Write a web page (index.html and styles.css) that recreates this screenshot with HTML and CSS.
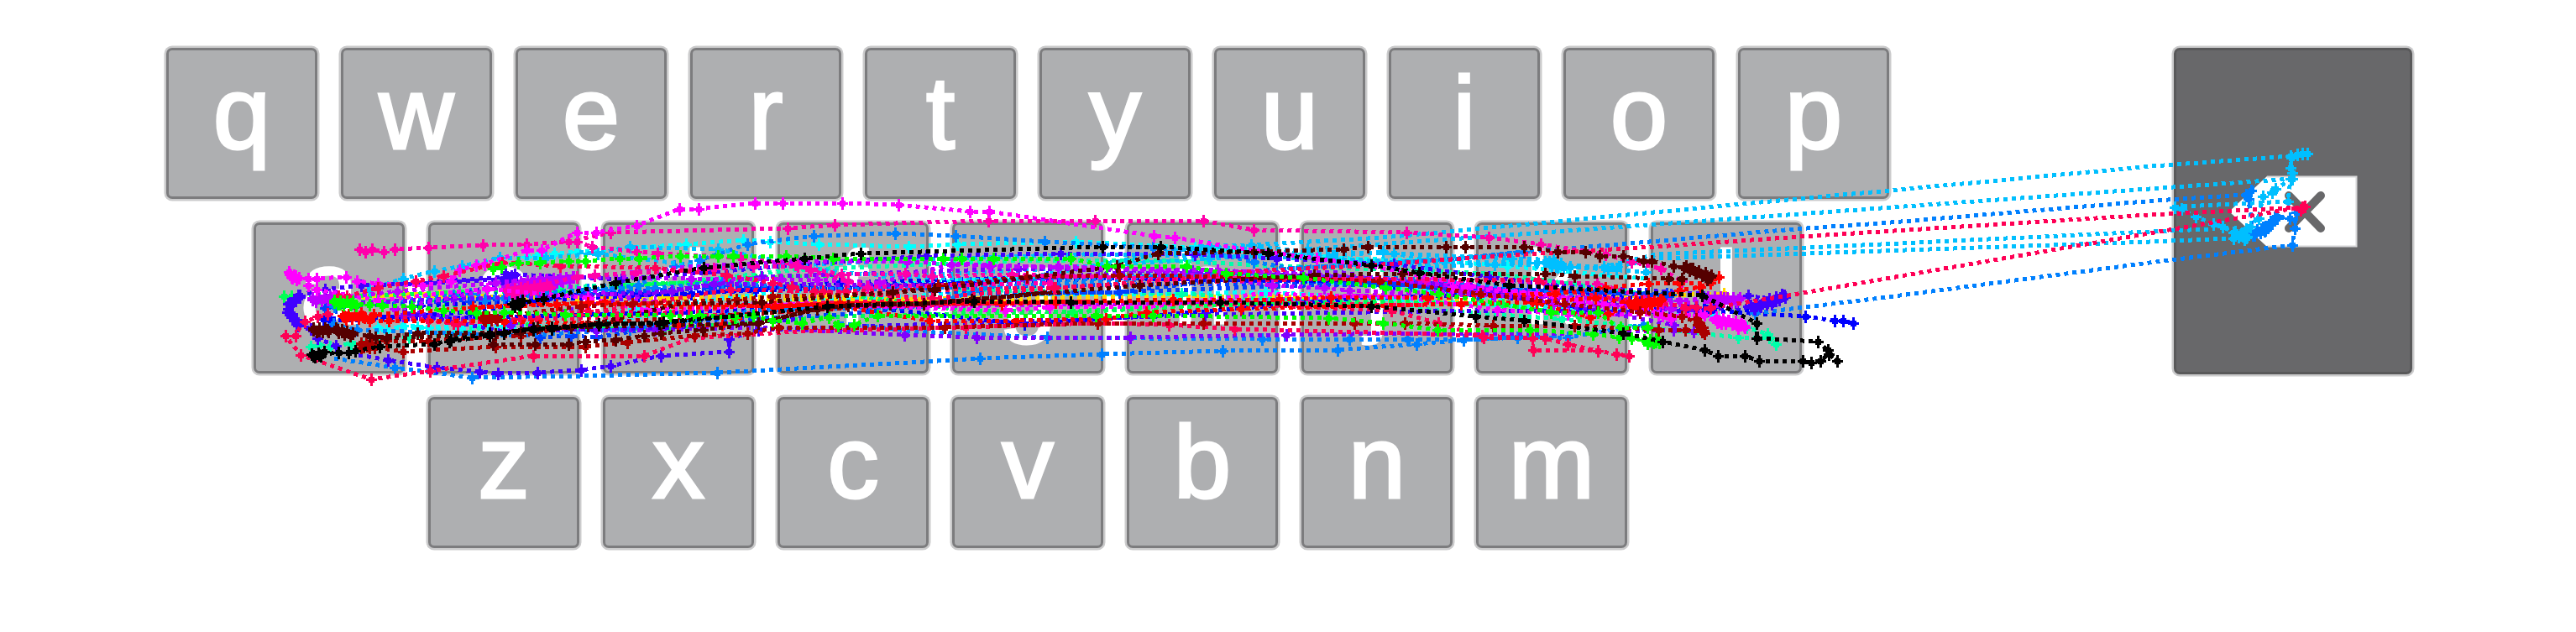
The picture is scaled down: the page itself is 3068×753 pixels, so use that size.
FILE: index.html
```html
<!DOCTYPE html>
<html lang="en">
<head>
<meta charset="utf-8">
<title>Keyboard gesture traces</title>
<link rel="stylesheet" href="styles.css">
</head>
<body>
<main class="board">
  <div class="keys">
    <div class="row row-top"><span class="key">q</span><span class="key">w</span><span class="key">e</span><span class="key">r</span><span class="key">t</span><span class="key">y</span><span class="key">u</span><span class="key">i</span><span class="key">o</span><span class="key">p</span></div>
    <div class="row row-home"><span class="key">a</span><span class="key">s</span><span class="key">d</span><span class="key">f</span><span class="key">g</span><span class="key">h</span><span class="key">j</span><span class="key">k</span><span class="key">l</span></div>
    <div class="row row-bottom"><span class="key">z</span><span class="key">x</span><span class="key">c</span><span class="key">v</span><span class="key">b</span><span class="key">n</span><span class="key">m</span></div>
  </div>
  <div class="key key-delete">
    <svg class="delete-icon" viewBox="0 0 154 86" width="154" height="86">
      <path d="M1 43L46 1H153V85H46Z" fill="#fff"/>
      <path d="M46 1.5H152.5V84.5H46" fill="none" stroke="#d6d6d7" stroke-width="2"/>
      <path d="M72 24L110 63M110 24L72 63" fill="none" stroke="#68686a" stroke-width="10" stroke-linecap="round"/>
    </svg>
  </div>
  <svg class="traces" viewBox="0 0 3068 753" width="3068" height="753"></svg>
</main>
<script src="traces.js"></script>
</body>
</html>
```

FILE: styles.css
```css
body {
  margin: 0;
  background: #fff;
  font-family: "Liberation Sans", Arial, sans-serif;
}

.board {
  position: relative;
  box-sizing: border-box;
  display: flex;
  align-items: flex-start;
  gap: 339px;
  width: 3068px;
  height: 753px;
  padding: 57px 0 0 198px;
  overflow: hidden;
}

.keys {
  display: flex;
  flex-direction: column;
  gap: 28px;
}

.row {
  display: flex;
  gap: 28px;
}

.row-home {
  padding-left: 104px;
}

.row-bottom {
  padding-left: 312px;
}

.key {
  box-sizing: border-box;
  width: 180px;
  height: 180px;
  border: 3px solid #7c7c7e;
  border-radius: 7px;
  background: #aeafb1;
  box-shadow: 0 0 0 2.5px #cbcbcc;
  color: #fff;
  font-size: 123px;
  line-height: 149px;
  text-align: center;
  -webkit-text-stroke: 3px #fff;
}

.key-delete {
  display: flex;
  align-items: center;
  justify-content: center;
  width: 284px;
  height: 389px;
  border-color: #59595a;
  background: #68686a;
}

.traces {
  position: absolute;
  inset: 0;
}

.line {
  fill: none;
  stroke-width: 5;
  stroke-dasharray: 5 5;
  shape-rendering: crispEdges;
}

.mark {
  shape-rendering: crispEdges;
}
```

FILE: traces.js
```js
// Each trace: colour, points. A "~" point bends the line without a mark.
const traces = [
  ["#ffd500", "433,352 523,352 687,355 790,353 983,353 ~1050,357 ~1323,353 ~1487,353 ~1690,357 ~1790,357 2053,350"],
  ["#ffd500", "483,350 600,354 ~900,356 ~1110,360 ~1323,356 ~1487,357 ~1640,353 ~1800,359"],
  ["#ffd500", "~1390,351 ~1500,355 ~1640,352 ~1720,358"],
  ["#00ffff", "450,390 497,390 545,393 700,385 ~900,362 ~1140,350 1403,350 1507,348 ~1770,363 ~1900,370 2040,374"],
  ["#00ffff", "627,306 640,304 660,302 687,300 817,291 885,286 917,288 975,291 1082,294 1140,291 1281,288 1423,295 ~1607,308 ~1703,310 1795,317 ~1960,332"],
  ["#00ffff", "460,394 480,388 510,390 600,388 760,368 950,345 ~1190,332 ~1450,326 1700,345 1900,372"],
  ["#00ffaa", "370,413 380,411 393,413 418,409 487,402 560,396 663,342 ~800,338 ~940,322 ~1200,311 ~1380,310 ~1500,316 ~1780,326 1960,350"],
  ["#00ffaa", "~1140,345 1407,350 ~1607,362 ~1757,373 1860,380 2070,402 2107,402 2115,410 2105,398 2080,390"],
  ["#00ff55", "338,353 347,353 380,355 547,348 670,347 740,342 780,338 823,337 900,333 ~1000,350 ~1150,370 1277,372 ~1440,364 ~1607,358 1790,363 1880,376"],
  ["#00ff55", "400,360 520,358 640,390 790,392 ~1000,377 1277,371 ~1500,360 ~1660,362 1790,363"],
  ["#00ff55", "~740,340 ~820,337 ~900,331 ~1010,328"],
  ["#0000ff", "385,380 483,377 560,372 693,350 823,350 1000,337 1247,330 ~1480,334 ~1700,338 1880,366 2033,370 2150,377 2185,382 2195,382 2207,385"],
  ["#0000ff", "393,382 590,378 820,372 1010,364 1220,386 ~1400,374 ~1620,355 1800,350 1980,362"],
  ["#0000ff", "500,364 640,358 760,352 900,346 ~1060,341 ~1240,334 ~1440,330 1660,338 1820,346 1960,356 2040,366 2090,371"],
  ["#0040ff", "387,367 400,366 590,355 700,349 847,343 ~1000,342 ~1200,350 1333,348 ~1500,328 1723,343 1900,348 1980,352"],
  ["#0040ff", "643,402 680,400 710,402 830,382 ~1000,375 ~1240,350 1333,348 ~1720,334 1960,350 1985,350"],
  ["#0040ff", "560,359 620,352 700,352 860,340 ~1020,345 ~1220,341 ~1420,338 1680,340 1760,350 1850,345 1990,351"],
  ["#0080ff", "397,386 425,393 620,400 750,392 ~900,370 ~1100,365 ~1200,336 ~1493,325 ~1700,333 1900,355"],
  ["#0080ff", "398,365 560,350 600,355 720,345 760,340 803,317 833,310 890,291 969,281 1066,278 1138,281 1244,288 1373,295 ~1440,300 1493,312 ~1540,320 ~1737,308 1815,300 ~1930,291 ~2137,273 ~2240,266 ~2567,239 2675,232 2681,227 2678,237 ~2682,270 2683,280 2693,273 2697,275 2704,268 2712,258 2727,260 2735,253 2733,272 2730,292 ~2560,313 ~2240,355 ~2133,368 2090,373"],
  ["#0080ff", "~398,427 470,438 562,450 ~693,448 854,444 ~1083,432 1167,427 1312,422 1456,418 1593,417 1687,410 1743,405 1807,402 1867,402 1957,387"],
  ["#0080ff", "~1000,385 ~1090,395 1247,402 ~1363,403 1503,404 1607,404 1676,404 1743,405 ~1860,400"],
  ["#0080ff", "540,352 577,358 606,352 700,345 780,343 860,336 ~980,345 ~1180,342 ~1380,332 ~1560,318 ~1700,312 1815,300"],
  ["#00bfff", "440,345 480,332 517,323 550,317 595,307 650,307 712,302 750,294 855,297 ~1000,325 ~1200,335 ~1423,295 1440,293 ~1490,292 ~1647,283 ~1810,268 ~2140,237 ~2240,228 ~2563,198 2728,186 2736,184 2742,183 2748,183 2729,188 2728,200 2730,206 2730,213 ~2560,225 ~2240,248 ~1990,266 ~1783,281 1557,297"],
  ["#00bfff", "2730,213 2710,225 2706,229 2695,234 2690,260 2675,273 2675,283 2668,280 2660,277 2647,270 2636,267 2615,258 2598,249 2590,247 ~2600,246 2725,240 2728,213"],
  ["#00bfff", "1490,292 1587,305 1647,300 1720,312 1853,317 1910,318 ~1973,303 ~2240,291 ~2560,276 ~2632,273"],
  ["#00bfff", "1430,294 1500,297 1590,308 1700,318 1780,315 1840,312 1853,317 1915,320 ~1973,308 ~2240,299 ~2560,288 2660,284 2670,278 2680,270"],
  ["#00bfff", "~1050,330 ~1220,322 1440,308 ~1560,300 1660,302 1800,308 1850,310 1870,318 1960,324"],
  ["#00bfff", "~690,300 ~860,320 ~1080,310 ~1290,303 ~1500,306 ~1690,312 1830,313 1925,320"],
  ["#7f00ff", "480,376 490,375 500,373 607,387 710,394 780,393 ~900,390 1077,399 1163,402 1346,402 1532,399 ~1690,397 ~1850,398 1993,393 2017,395"],
  ["#7f00ff", "420,361 540,356 700,352 800,347 907,330 1213,320 1420,323 ~1600,325 1777,350 1900,370 1993,387"],
  ["#7f00ff", "610,385 720,360 850,338 ~1120,340 ~1330,325 1460,326 ~1600,330 1750,340 1850,358 1980,367 2020,370"],
  ["#4000ff", "~427,423 462,429 520,438 571,443 593,445 640,444 692,441 727,436 787,424 868,419 868,404 903,393 ~1150,385 1435,375 ~1757,370 ~1980,372 ~2080,366 2097,365 2110,362 2123,352 2115,358 2082,352"],
  ["#4000ff", "400,412 378,403 370,392 353,386 350,380 342,372 343,362 350,358 357,352 387,345 430,340 ~520,337 607,332 613,327 740,333 ~983,313 1103,305 1263,302 ~1327,302 1423,303 1520,308 1660,315 1773,330 1850,340 2027,350 2090,368 2105,360 2125,352"],
  ["#4000ff", "~480,338 602,330 ~618,325 600,336 ~480,372 ~600,395 ~800,390 ~960,380"],
  ["#bf00ff", "372,357 393,356 473,347 590,337 643,332 683,330 823,332 930,333 973,333 1047,337 1133,315 1178,317 1260,317 1380,322 1515,340 1577,343 1607,346 1780,352 2000,358 2053,355 2070,357"],
  ["#bf00ff", "602,345 650,334 ~820,318 950,311 1080,312 1180,316 1260,319 1450,322 ~1640,331 1820,350 1960,362 2045,359 2062,360"],
  ["#bf00ff", "470,368 610,340 660,338 780,360 900,363 ~1100,365 ~1340,362 ~1560,356 1740,346 1850,362 1990,368"],
  ["#ff00aa", "603,346 612,349 625,344 643,340 687,330 708,328 757,325 850,320 897,317 950,317 1002,327 1078,326 1110,329 1205,327 ~1400,333 ~1500,331 1697,333 1902,338 1980,360"],
  ["#ff00aa", "687,288 705,294 758,300 783,302 882,307 947,315 965,322 1010,335 1033,342 1250,337"],
  ["#ff00aa", "428,297 435,300 443,297 457,300 470,297 510,295 575,292 627,291 677,288 727,277 938,272 994,268 1177,263 1304,263 1433,263 1493,274 1675,277 1773,283 1835,291 1912,303 1943,312 1978,320 2003,335"],
  ["#ff00ff", "345,327 348,331 352,329 367,332 377,332 412,330 425,335 450,338 503,340 537,335 547,322 567,316 577,315 627,298 645,298 687,277 710,277 758,269 809,249 832,249 899,242 932,242 1003,242 1070,244 1155,252 1178,252 1374,281 1399,283 ~1470,295 1568,308 ~1633,317 1747,340 1850,352 1990,380"],
  ["#ff00ff", "367,340 377,345 450,358 580,344 700,355 770,370 960,362 1197,370 1250,366 ~1375,365 ~1500,350 ~1670,354 1783,369 1867,374 1975,375 2030,375 2045,384 2058,382 2073,387 2077,388"],
  ["#ff00ff", "1730,342 1830,350 1880,358 1910,362 1960,366 1980,376 2025,376 2050,385 2070,391"],
  ["#ff0055", "378,377 390,374 363,383 ~352,398 352,400 340,400 358,423 442,452 512,442 635,424 767,424 ~823,403 ~950,395 1150,390 1307,385 1392,387 1470,392 ~1670,397 1765,400 1825,403 1826,417 1903,418 1925,422 1940,424"],
  ["#ff0055", "430,373 540,385 640,380 735,378 900,363 ~1090,358 ~1300,360 ~1490,363 1657,370 1713,385 1767,402 1840,403 1867,410 1903,418"],
  ["#ff0055", "403,353 413,353 450,343 495,335 528,329 598,313 667,317 780,319 865,328 920,337 943,342 980,347 1007,347 1257,343 ~1350,337 ~1493,323 ~1620,317 ~1783,305 ~1987,293 ~2143,282 ~2240,276 ~2560,256 2742,247 2740,250 2745,246 ~2560,278 ~2240,333 ~2130,352 2037,367 2007,367"],
  ["#ff0055", "690,375 870,345 970,347 1110,355 1255,343 ~1480,334 1620,332 1832,334 1850,345 1950,360 2020,366"],
  ["#ff0055", "510,382 545,386 620,380 700,370 860,376 ~1010,366 ~1240,360 ~1500,361 ~1700,364"],
  ["#ff0000", "412,378 432,377 440,382 463,382 600,383 807,387 860,387 923,365 985,363 1107,382 1210,382 1317,380 1365,372 1478,368 1740,362 1825,360 1894,378 1915,374 1947,362 1960,362 1977,358"],
  ["#ff0000", "563,366 663,363 720,360 930,365 1000,361 1193,362 1257,360 1397,357 1523,357 1585,354 1700,355 1852,350 1912,343 1963,338 2000,337 2037,337 2047,330"],
  ["#ff0000", "1830,360 1900,355 1950,362 1965,361 2000,346 2025,342 2037,337"],
  ["#ff0000", "410,377 445,375 620,363 700,361 ~820,366 ~940,364 ~1100,361"],
  ["#aa0000", "430,410 437,412 480,419 590,413 697,413 747,408 827,400 890,397 927,390 1125,390 1307,385 1433,385 1613,385 1673,385 1778,388 1875,388 1975,393 2007,393 2027,395"],
  ["#aa0000", "576,380 590,378 692,365 753,362 877,357 920,353 ~1060,350 1117,340 1223,330 1333,328 ~1490,330 1643,335 1763,350 1863,362 1953,372 2003,377 2023,385 2029,394"],
  ["#aa0000", "430,414 460,406 510,406 620,400 700,385 ~860,376 ~1010,367"],
  ["#550000", "373,393 380,394 390,393 402,393 407,395 420,397 447,402 497,397 620,396 680,390 903,385 ~985,366 ~1080,363 1157,357 1357,340 1565,328 1670,326 1840,326 1875,329 1987,332 2003,332"],
  ["#550000", "587,410 637,410 677,410 697,407 733,405 767,400 787,397 837,393 903,385 973,368 1010,364 1060,362 1100,362 1157,357 ~1250,348"],
  ["#550000", "440,400 460,403 590,398 640,390 700,388 ~810,362 907,360 1063,348 1113,345 1330,317 1379,302 1493,300 1600,297 1629,294 1722,294 1745,294 1815,294 1855,300 1888,300 1905,305 1933,305 1957,311 1967,311 1993,317 2005,319 2013,320 2020,325 2027,328 2033,333 2037,330"],
  ["#000000", "535,407 583,400 600,397 635,391 657,392 713,386 785,385 ~867,377"],
  ["#00ff00", "398,360 405,362 418,362 440,363 455,364 490,365 528,370 567,373 600,372 673,375 798,376 823,378 833,376 875,378 897,376 920,382 955,385 987,378 998,388 1017,387 1045,376 ~1227,376 1305,376 1373,376 1582,379 1647,385 1712,393 1822,393 1897,398 1928,402 1943,403 1965,406 1972,407"],
  ["#00ff00", "587,320 597,318 617,313 643,313 677,311 697,311 738,308 761,308 810,305 855,305 873,305 936,305 992,308 1123,308 1145,308 1183,308 1275,308 1318,317 1413,317 1460,326 1552,331 1650,343 1713,350 1847,372 1903,372 ~1920,385 1930,390 1962,390"],
  ["#000000", "373,424 380,423 403,420 415,420 423,418 452,413 517,410 537,405 583,397 635,393 657,390 713,387 790,384 ~867,377 ~937,370 985,365 1160,359 1275,360 1453,360 1633,365 1757,377 1815,382 1933,397 1980,407 2030,417 2046,424 2078,424 2095,430 2147,430 2157,432 2168,430 2178,422 2188,430 2177,417 2165,407 2092,403 2092,385 ~2057,367 2027,352 1797,340 1690,325 1633,316 1510,302 1382,294 1313,294 1025,302 958,308 838,319 733,337 647,356 617,362 613,364"]
];

// Resting spots where samples pile up: colour, then the path they follow.
const clusters = {
  "#ff00ff": ["344,326 356,333", "2044,380 2078,388"],
  "#bf00ff": ["372,357 400,354", "620,338 682,332", "2034,356 2072,357"],
  "#4000ff": ["345,363 357,352", "343,370 355,386", "602,328 613,332", "2085,366 2126,352"],
  "#ff00aa": ["605,347 655,340"],
  "#00bfff": ["1845,314 1862,317", "2662,278 2676,284"],
  "#0080ff": ["2682,279 2698,272", "2698,272 2712,258"],
  "#550000": ["373,393 391,393", "400,393 420,399", "2008,319 2038,330"],
  "#aa0000": ["575,380 592,379", "430,411 446,412", "2020,382 2030,395"],
  "#ff0000": ["408,378 434,376", "1940,362 1978,359"],
  "#00ff00": ["398,360 424,362", "1958,407 1976,406"],
  "#000000": ["371,424 386,421", "610,364 622,360"]
};

const NS = "http://www.w3.org/2000/svg";
const layer = document.querySelector(".traces");

// A stepped plus sign stamped on every sampled point.
const PLUS = "m-1-7h3v4h2v2h3v3h-3v2h-2v4h-3v-4h-2v-2h-3v-3h3v-2h2z";

function add(tag, cls, attrs) {
  const el = document.createElementNS(NS, tag);
  el.setAttribute("class", cls);
  for (const name in attrs) el.setAttribute(name, attrs[name]);
  layer.appendChild(el);
}

function pile(span) {
  const [a, b] = span.split(" ").map(p => p.split(",").map(Number));
  const steps = Math.ceil(Math.hypot(b[0] - a[0], b[1] - a[1]) / 4);
  const out = [];
  for (let i = 0; i <= steps; i++) {
    const t = i / steps;
    const sway = i % 2 ? 2 : -2;
    out.push(Math.round(a[0] + (b[0] - a[0]) * t) + "," + Math.round(a[1] + (b[1] - a[1]) * t + sway));
  }
  return out;
}

const lastOf = {};
traces.forEach(([color], i) => { lastOf[color] = i; });

traces.forEach(([color, data], i) => {
  add("polyline", "line", { points: data.replace(/~/g, ""), stroke: color });
  let marks = data.split(" ").filter(p => p[0] !== "~");
  if (lastOf[color] === i) marks = marks.concat((clusters[color] || []).flatMap(pile));
  add("path", "mark", { d: marks.map(p => "M" + p + PLUS).join(""), fill: color });
});
```
